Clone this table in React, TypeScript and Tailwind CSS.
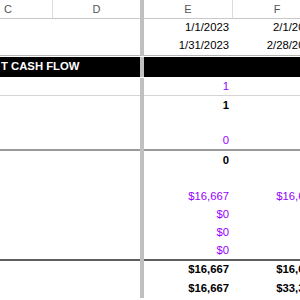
import React from "react";

type Tone = "purple" | "bold" | "plain";

type RowDef = {
  h: string;
  line?: string;
  e?: string;
  f?: string;
  tone?: Tone;
};

const rows: RowDef[] = [
  { h: "h-[18px]", e: "1/1/2023", f: "2/1/2023" },
  { h: "h-[19px]", line: "border-b border-[#b4b4b4]", e: "1/31/2023", f: "2/28/2023" },
];

const body: RowDef[] = [
  { h: "h-[18px]", line: "border-b border-[#d4d4d4]", e: "1", tone: "purple" },
  { h: "h-[19px]", e: "1", tone: "bold" },
  { h: "h-[18px]" },
  { h: "h-[18px]", line: "border-b-2 border-[#9a9a9a]", e: "0", tone: "purple" },
  { h: "h-[19px]", e: "0", tone: "bold" },
  { h: "h-[18px]" },
  { h: "h-[18px]", e: "$16,667", f: "$16,667", tone: "purple" },
  { h: "h-[18px]", e: "$0", f: "$0", tone: "purple" },
  { h: "h-[18px]", e: "$0", f: "$0", tone: "purple" },
  { h: "h-[19px]", line: "border-b-2 border-[#5f5f5f]", e: "$0", f: "$0", tone: "purple" },
  { h: "h-[18px]", e: "$16,667", f: "$16,667", tone: "bold" },
  { h: "h-[19px]", e: "$16,667", f: "$33,334", tone: "bold" },
];

const toneClass = (tone?: Tone) => {
  if (tone === "purple") return "text-[#9900ff]";
  if (tone === "bold") return "text-black font-bold";
  return "text-black";
};

const Bar = () => <div className="w-[4px] shrink-0 bg-[#c0c0c0]" />;

const DataRow = ({ row }: { row: RowDef }) => (
  <div className={`flex ${row.h}`}>
    <div className={`w-[176px] shrink-0 ${row.line ?? ""}`} />
    <Bar />
    <div className={`flex w-[177px] shrink-0 ${row.line ?? ""} ${toneClass(row.tone)}`}>
      <div className="flex w-[89px] items-center justify-end pr-[4px]">{row.e}</div>
      <div className="flex w-[88px] items-center justify-end pr-[4px]">{row.f}</div>
    </div>
  </div>
);

export default function App() {
  return (
    <div
      className="h-[300px] w-[300px] overflow-hidden bg-white text-[11.3px] leading-none"
      style={{ fontFamily: '"Liberation Sans", Arial, sans-serif' }}
    >
      <div className="ml-[-36px] w-[400px]">
        {/* column letters */}
        <div className="flex h-[19px] text-[11px] text-[#555]">
          <div className="flex w-[176px] shrink-0 border-b border-[#c8c8c8]">
            <div className="flex w-[89px] items-center justify-center border-r border-[#dcdcdc]">C</div>
            <div className="flex w-[87px] items-center justify-center">D</div>
          </div>
          <Bar />
          <div className="flex w-[177px] shrink-0 border-b border-[#c8c8c8]">
            <div className="flex w-[89px] items-center justify-center border-r border-[#dcdcdc]">E</div>
            <div className="flex w-[88px] items-center justify-center">F</div>
          </div>
        </div>

        {rows.map((r, i) => (
          <DataRow key={i} row={r} />
        ))}

        {/* section band */}
        <div className="flex h-[22px] py-px">
          <div className="flex w-[176px] shrink-0 items-center bg-black pl-[37px] font-bold text-white">
            T CASH FLOW
          </div>
          <Bar />
          <div className="w-[177px] shrink-0 bg-black" />
        </div>

        {body.map((r, i) => (
          <DataRow key={i} row={r} />
        ))}
      </div>
    </div>
  );
}
